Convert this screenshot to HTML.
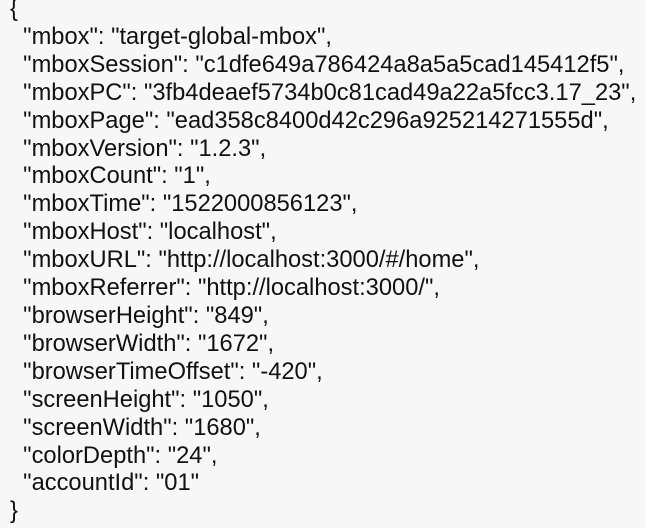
<!DOCTYPE html>
<html><head><style>
html,body{margin:0;padding:0;background:#f7f7f7;width:646px;height:528px;overflow:hidden}
pre{position:absolute;left:10px;top:-4px;margin:0;font-family:"Liberation Sans",Arial,sans-serif;font-size:23.7px;line-height:27.9px;color:#111}
</style></head><body>
<pre>{
  "mbox": "target-global-mbox",
  "mboxSession": "c1dfe649a786424a8a5a5cad145412f5",
  "mboxPC": "3fb4deaef5734b0c81cad49a22a5fcc3.17_23",
  "mboxPage": "ead358c8400d42c296a925214271555d",
  "mboxVersion": "1.2.3",
  "mboxCount": "1",
  "mboxTime": "1522000856123",
  "mboxHost": "localhost",
  "mboxURL": "http://localhost:3000/#/home",
  "mboxReferrer": "http://localhost:3000/",
  "browserHeight": "849",
  "browserWidth": "1672",
  "browserTimeOffset": "-420",
  "screenHeight": "1050",
  "screenWidth": "1680",
  "colorDepth": "24",
  "accountId": "01"
}</pre>
</body></html>
